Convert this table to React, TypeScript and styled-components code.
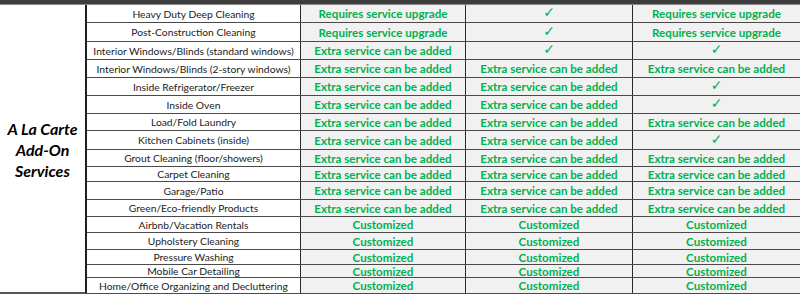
import styled, { createGlobalStyle } from "styled-components";

const GlobalStyle = createGlobalStyle`
  html, body {
    margin: 0;
    padding: 0;
    background: #ffffff;
    overflow: hidden;
  }
  body {
    font-family: Lato, "Liberation Sans", sans-serif;
  }
`;

type Mark = "req" | "extra" | "check" | "custom";

interface ServiceRow {
  label: string;
  h: number;
  cells: Mark[];
}

const rows: ServiceRow[] = [
  { label: "Heavy Duty Deep Cleaning", h: 18, cells: ["req", "check", "req"] },
  { label: "Post-Construction Cleaning", h: 19, cells: ["req", "check", "req"] },
  { label: "Interior Windows/Blinds (standard windows)", h: 18, cells: ["extra", "check", "check"] },
  { label: "Interior Windows/Blinds (2-story windows)", h: 18, cells: ["extra", "extra", "extra"] },
  { label: "Inside Refrigerator/Freezer", h: 18, cells: ["extra", "extra", "check"] },
  { label: "Inside Oven", h: 18, cells: ["extra", "extra", "check"] },
  { label: "Load/Fold Laundry", h: 17, cells: ["extra", "extra", "extra"] },
  { label: "Kitchen Cabinets (inside)", h: 19, cells: ["extra", "extra", "check"] },
  { label: "Grout Cleaning (floor/showers)", h: 17, cells: ["extra", "extra", "extra"] },
  { label: "Carpet Cleaning", h: 15, cells: ["extra", "extra", "extra"] },
  { label: "Garage/Patio", h: 18, cells: ["extra", "extra", "extra"] },
  { label: "Green/Eco-friendly Products", h: 17, cells: ["extra", "extra", "extra"] },
  { label: "Airbnb/Vacation Rentals", h: 16, cells: ["custom", "custom", "custom"] },
  { label: "Upholstery Cleaning", h: 17, cells: ["custom", "custom", "custom"] },
  { label: "Pressure Washing", h: 15, cells: ["custom", "custom", "custom"] },
  { label: "Mobile Car Detailing", h: 13, cells: ["custom", "custom", "custom"] },
  { label: "Home/Office Organizing and Decluttering", h: 16, cells: ["custom", "custom", "custom"] },
];

const markText: Record<Mark, string> = {
  req: "Requires service upgrade",
  extra: "Extra service can be added",
  check: "✓",
  custom: "Customized",
};

function App(): JSX.Element {
  return (
    <>
      <GlobalStyle />
      <Sheet>
        <TopBar />
        <Body>
          <Category>
            <CategoryTitle>
              A La Carte
              <br />
              Add-On
              <br />
              Services
            </CategoryTitle>
          </Category>
          <Table>
            {rows.map((row) => (
              <Row key={row.label} $h={row.h}>
                <Label>{row.label}</Label>
                {row.cells.map((c, i) => (
                  <Cell key={i} $check={c === "check"}>
                    {markText[c]}
                  </Cell>
                ))}
              </Row>
            ))}
          </Table>
        </Body>
      </Sheet>
    </>
  );
}
export default App;

const Sheet = styled.div`
  width: 800px;
  height: 294px;
  overflow: hidden;
  display: flex;
  flex-direction: column;
`;

const TopBar = styled.div`
  height: 5px;
  flex: none;
  background: #3d3d3d;
  border-bottom: 1px solid #8a8a8a;
  box-sizing: border-box;
`;

const Body = styled.div`
  display: flex;
  flex: 1;
  min-height: 0;
`;

const Category = styled.div`
  width: 87px;
  flex: none;
  display: flex;
  align-items: center;
  justify-content: center;
  border-right: 2px solid #1e1e1e;
  border-bottom: 2px solid #555555;
  box-sizing: border-box;
  background: #ffffff;
`;

const CategoryTitle = styled.h2`
  margin: 0;
  font-size: 16px;
  font-weight: 700;
  font-style: italic;
  line-height: 21px;
  text-align: center;
  color: #000000;
  padding-top: 2px;
`;

const Table = styled.div`
  flex: 1;
  display: flex;
  flex-direction: column;
`;

const Row = styled.div<{ $h: number }>`
  height: ${(p) => p.$h}px;
  flex: none;
  display: grid;
  grid-template-columns: 214px 165px 167px 167px;
  border-bottom: 1px solid #4a4a4a;
  box-sizing: border-box;
`;

const Label = styled.div`
  display: flex;
  align-items: center;
  justify-content: center;
  font-size: 10.3px;
  color: #222222;
  white-space: nowrap;
  background: #ffffff;
  border-right: 1px solid #2a2a2a;
`;

const Cell = styled.div<{ $check: boolean }>`
  display: flex;
  align-items: center;
  justify-content: center;
  overflow: hidden;
  background: #f1f1f1;
  color: #00b050;
  font-weight: 700;
  font-size: ${(p) => (p.$check ? "14px" : "11.6px")};
  font-family: ${(p) => (p.$check ? '"DejaVu Sans", sans-serif' : 'Lato, "Liberation Sans", sans-serif')};
  padding-bottom: ${(p) => (p.$check ? "3px" : "0")};
  box-sizing: border-box;
  white-space: nowrap;
  border-right: 1px solid #2a2a2a;
  &:last-child {
    border-right: none;
  }
`;
